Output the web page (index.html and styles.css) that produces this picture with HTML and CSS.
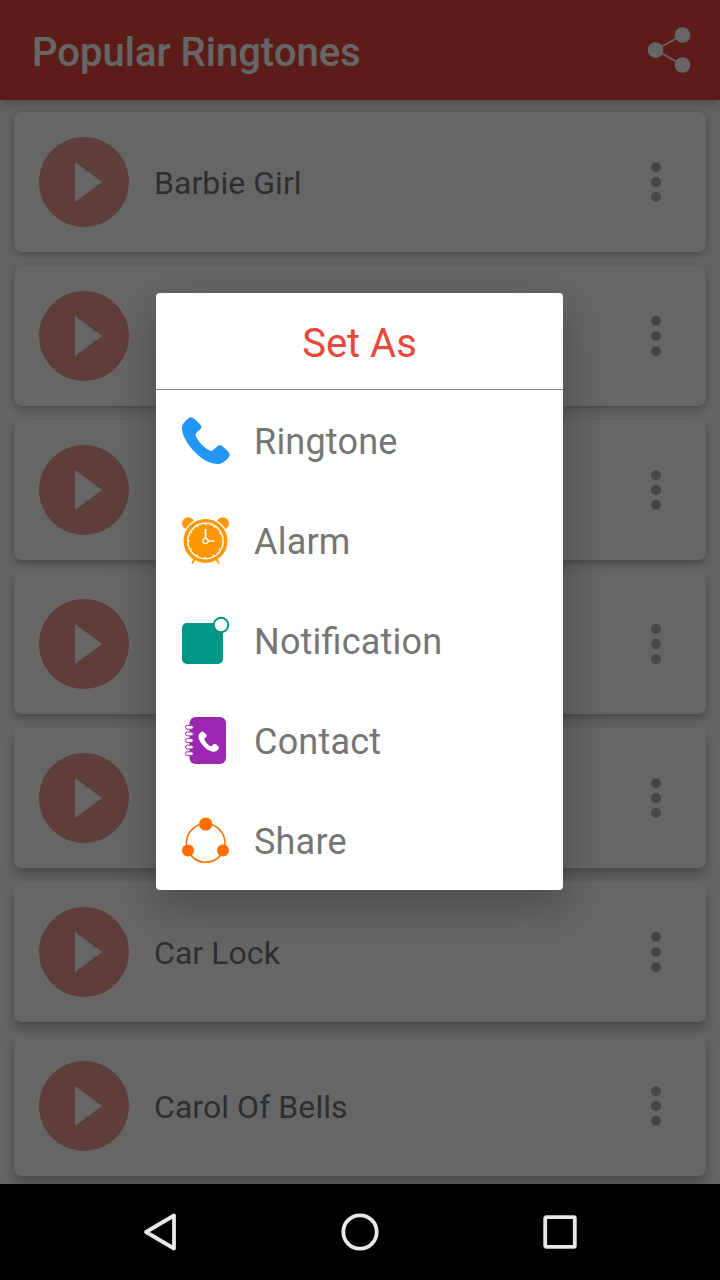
FILE: index.html
```html
<!DOCTYPE html>
<html lang="en">
<head>
<meta charset="utf-8">
<title>Popular Ringtones</title>
<link rel="stylesheet" href="styles.css">
</head>
<body>
<svg class="defs" width="0" height="0">
  <symbol id="play" viewBox="0 0 90 90"><circle cx="45" cy="45" r="45" fill="#ee9992"/><path d="M36 25v40l27-20z" fill="#fff"/></symbol>
  <symbol id="more" viewBox="0 0 12 42"><circle cx="6" cy="6" r="5.1"/><circle cx="6" cy="21" r="5.1"/><circle cx="6" cy="36" r="5.1"/></symbol>
</svg>
<div class="screen">
  <div class="app">
    <header class="appbar">
      <h1 class="title">Popular Ringtones</h1>
      <svg class="share" width="44" height="46" viewBox="0 0 44 46"><path d="M34.5 8 7.5 23l27 15" fill="none" stroke="#fff" stroke-width="1.6"/><g fill="#fff"><circle cx="34.5" cy="8" r="7.8"/><circle cx="7.5" cy="23" r="7.8"/><circle cx="34.5" cy="38" r="7.8"/></g></svg>
    </header>
    <main class="list">
      <div class="card depth-1"><svg class="play"><use href="#play"/></svg><span class="name">Barbie Girl</span><svg class="more"><use href="#more"/></svg></div>
      <div class="card depth-2"><svg class="play"><use href="#play"/></svg><span class="name"></span><svg class="more"><use href="#more"/></svg></div>
      <div class="card depth-3"><svg class="play"><use href="#play"/></svg><span class="name"></span><svg class="more"><use href="#more"/></svg></div>
      <div class="card depth-4"><svg class="play"><use href="#play"/></svg><span class="name"></span><svg class="more"><use href="#more"/></svg></div>
      <div class="card depth-5"><svg class="play"><use href="#play"/></svg><span class="name"></span><svg class="more"><use href="#more"/></svg></div>
      <div class="card depth-6"><svg class="play"><use href="#play"/></svg><span class="name">Car Lock</span><svg class="more"><use href="#more"/></svg></div>
      <div class="card depth-7"><svg class="play"><use href="#play"/></svg><span class="name">Carol Of Bells</span><svg class="more"><use href="#more"/></svg></div>
    </main>
  </div>
  <nav class="navbar">
    <svg width="40" height="40" viewBox="0 0 40 40"><path d="M34 3.5v33L6 20z"/></svg>
    <svg width="40" height="40" viewBox="0 0 40 40"><circle cx="20" cy="20" r="16.7"/></svg>
    <svg width="40" height="40" viewBox="0 0 40 40"><rect x="5.2" y="5.2" width="29.6" height="29.6" rx="1"/></svg>
  </nav>
  <div class="scrim">
    <section class="dialog">
      <h2 class="dialog-title">Set As</h2>
      <div class="option">
        <svg class="icon" viewBox="0 0 48 48"><path fill="#2196f3" d="M5.500 2Q9-1.500 12.500 2L18 7.200Q20.800 10 18 12.500L14.500 15.500Q13 17.500 14 19.500C17 25.500 22 30.500 27.500 33.500Q29.500 34.500 31.200 33L35 29.500Q38 27 41 29.800L46 34.500Q49 37.500 46.500 40.500C43 44.500 40 47 35.500 47C25 47 14.500 38 8 29.500C3.500 23.500 0 17 0 11.500C0 7 2.500 5 5.500 2Z"/></svg>
        <span>Ringtone</span>
      </div>
      <div class="option">
        <svg class="icon" viewBox="0 0 48 48">
          <g fill="#ff9800"><circle cx="6.300" cy="6.500" r="6.200"/><circle cx="40.700" cy="6.500" r="6.200"/></g>
          <circle cx="23.500" cy="24" r="23.400" fill="#fff"/><circle cx="23.500" cy="24" r="22" fill="#ff9800"/>
          <circle cx="23.500" cy="24" r="17.700" fill="none" stroke="#fff" stroke-width="1.400"/>
          <circle cx="23.500" cy="24" r="16.500" fill="none" stroke="#fff" stroke-width="2" stroke-dasharray="1.100 7.540" stroke-dashoffset=".55"/>
          <path d="M23.500 24V12M23.500 24H32.500" stroke="#fff" stroke-width="1.700"/>
          <circle cx="23.500" cy="24" r="2.600" fill="#ff9800" stroke="#fff" stroke-width="1.300"/>
          <path d="M13 41.500l-3 5M34 41.500l3 5" stroke="#ff9800" stroke-width="1.800"/>
        </svg>
        <span>Alarm</span>
      </div>
      <div class="option">
        <svg class="icon" viewBox="0 0 48 48"><rect x="0" y="6" width="41" height="41" rx="5" fill="#009688"/><circle cx="39" cy="8" r="7.200" fill="#fff" stroke="#009688" stroke-width="2"/></svg>
        <span>Notification</span>
      </div>
      <div class="option">
        <svg class="icon" viewBox="0 0 48 48">
          <rect x="7.500" y="0" width="36.500" height="47" rx="6" fill="#9c27b0"/>
          <g fill="#fff" stroke="#9c27b0" stroke-width="1"><rect x="3.500" y="8.400" width="7.800" height="3.800" rx="1.900"/><rect x="3.500" y="15" width="7.800" height="3.800" rx="1.900"/><rect x="3.500" y="21.600" width="7.800" height="3.800" rx="1.900"/><rect x="3.500" y="28.200" width="7.800" height="3.800" rx="1.900"/><rect x="3.500" y="34.800" width="7.800" height="3.800" rx="1.900"/></g>
          <path transform="translate(16.500 14.500) scale(.43)" fill="#fff" d="M5.500 2Q9-1.500 12.500 2L18 7.200Q20.800 10 18 12.500L14.500 15.500Q13 17.500 14 19.500C17 25.500 22 30.500 27.500 33.500Q29.500 34.500 31.200 33L35 29.500Q38 27 41 29.800L46 34.500Q49 37.500 46.500 40.500C43 44.500 40 47 35.500 47C25 47 14.500 38 8 29.500C3.500 23.500 0 17 0 11.500C0 7 2.500 5 5.500 2Z"/>
        </svg>
        <span>Contact</span>
      </div>
      <div class="option">
        <svg class="icon" viewBox="0 0 48 48"><circle cx="23.700" cy="26" r="19.300" fill="none" stroke="#ff6f00" stroke-width="1.500"/><g fill="#ff6f00"><circle cx="23.700" cy="7" r="6.600"/><circle cx="6" cy="33.500" r="6"/><circle cx="41" cy="33.500" r="6"/></g></svg>
        <span>Share</span>
      </div>
    </section>
  </div>
</div>
</body>
</html>
```

FILE: styles.css
```css
* { box-sizing: border-box; }
body { margin: 0; font-family: Roboto, "Noto Sans", sans-serif; }
.defs { position: absolute; }
.screen { position: relative; width: 720px; height: 1280px; overflow: hidden; display: flex; flex-direction: column; }
.app { height: 1184px; overflow: hidden; background: #fafafa; }
.appbar {
  position: relative; z-index: 1; height: 100px; padding: 0 28px 0 32px;
  display: flex; align-items: center; justify-content: space-between;
  background: #e5493d; box-shadow: 0 3px 10px rgba(0, 0, 0, .28);
}
.title { margin: 6px 0 0; font-size: 40px; line-height: 48px; font-weight: 500; color: #fff; }
.list { display: flex; flex-direction: column; gap: 14px; padding: 12px 14px; }
.card {
  height: 140px; flex: none; display: flex; align-items: center;
  padding: 0 44px 0 25px; border-radius: 8px; background: #fff;
}
.depth-1 { box-shadow: 0 2px 8px rgba(0, 0, 0, .27); }
.depth-2 { box-shadow: 0 3px 9px rgba(0, 0, 0, .27); }
.depth-3 { box-shadow: 0 4px 9px rgba(0, 0, 0, .27); }
.depth-4 { box-shadow: 0 5px 10px rgba(0, 0, 0, .27); }
.depth-5 { box-shadow: 0 6px 11px rgba(0, 0, 0, .27); }
.depth-6 { box-shadow: 0 7px 12px rgba(0, 0, 0, .27); }
.depth-7 { box-shadow: 0 8px 12px rgba(0, 0, 0, .27); }
.play { width: 90px; height: 90px; }
.name { flex: 1; margin-left: 25px; padding-top: 1px; font-size: 32px; line-height: 38px; letter-spacing: .06px; color: #747474; }
.more { width: 12px; height: 42px; fill: #b0b0b0; }
.navbar { height: 96px; display: flex; justify-content: center; align-items: center; gap: 160px; background: #000; }
.navbar svg { fill: none; stroke: #e8e8e8; stroke-width: 3.8; stroke-linejoin: round; }
.scrim {
  position: absolute; z-index: 2; top: 0; left: 0; width: 720px; height: 1184px;
  padding: 293px 0 0 156px; background: rgba(0, 0, 0, .6);
}
.dialog { width: 407px; height: 597px; border-radius: 4px; background: #fff; box-shadow: 0 16px 44px rgba(0, 0, 0, .28); }
.dialog-title {
  height: 97px; margin: 0; padding-top: 4px; border-bottom: 1px solid #888;
  font-size: 40px; line-height: 94px; font-weight: 400; text-align: center; color: #e5493d;
}
.option {
  height: 100px; display: flex; align-items: center; gap: 24px; padding-left: 26px;
  font-size: 36px; line-height: 44px; letter-spacing: .2px; font-feature-settings: "liga" 1; color: #757575;
}
.option span { padding-top: 3px; }
.icon { width: 48px; height: 48px; margin-top: 1px; overflow: visible; }
```
